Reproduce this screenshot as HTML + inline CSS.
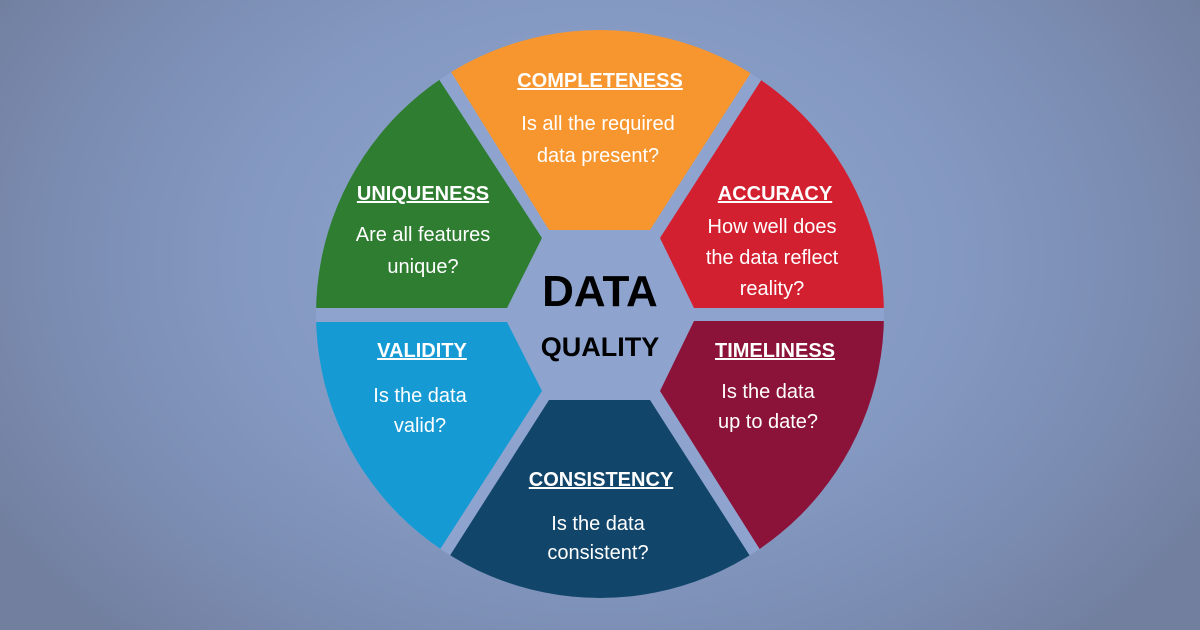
<!DOCTYPE html>
<html><head><meta charset="utf-8"><style>
html,body{margin:0;padding:0;width:1200px;height:630px;overflow:hidden}
body{background:radial-gradient(ellipse 700px 520px at 600px 260px,#90a6cf 0%,#8499c2 50%,#7a8bb0 80%,#727f9f 100%)}
svg text{font-family:"Liberation Sans",sans-serif}
.t{fill:#fff;font-weight:bold;font-size:20px;text-decoration:underline}
.b{fill:#fff;font-size:20px}
</style></head><body>
<svg width="1200" height="630" viewBox="0 0 1200 630">
<defs><clipPath id="c"><circle cx="600" cy="314" r="284"/></clipPath></defs>
<circle cx="600" cy="314" r="284" fill="#8ea4cf"/>
<g clip-path="url(#c)">
<polygon points="549,230 650,230 800,-4 404,-4" fill="#f7952f"/>
<polygon points="660,238 810,4 950,4 950,308 694,308" fill="#d32030"/>
<polygon points="694,321 950,321 950,630 810,629 660,391" fill="#8b1238"/>
<polygon points="549,400 650,400 800,634 400,634" fill="#12456a"/>
<polygon points="507,322 250,322 250,630 390,627 542,391" fill="#159ad4"/>
<polygon points="507,308 542,238 390,4 250,4 250,308" fill="#2e7d31"/>
</g>
<g text-anchor="middle">
<text class="t" x="600" y="87">COMPLETENESS</text>
<text class="b" x="598" y="130">Is all the required</text>
<text class="b" x="598" y="162">data present?</text>
<text class="t" x="423" y="200">UNIQUENESS</text>
<text class="b" x="423" y="241">Are all features</text>
<text class="b" x="423" y="273">unique?</text>
<text class="t" x="775" y="200">ACCURACY</text>
<text class="b" x="772" y="233">How well does</text>
<text class="b" x="772" y="264">the data reflect</text>
<text class="b" x="772" y="295">reality?</text>
<text class="t" x="422" y="357">VALIDITY</text>
<text class="b" x="420" y="402">Is the data</text>
<text class="b" x="420" y="432">valid?</text>
<text class="t" x="775" y="357">TIMELINESS</text>
<text class="b" x="768" y="398">Is the data</text>
<text class="b" x="768" y="428">up to date?</text>
<text class="t" x="601" y="486">CONSISTENCY</text>
<text class="b" x="598" y="530">Is the data</text>
<text class="b" x="598" y="559">consistent?</text>
<text x="600" y="306" font-size="44" font-weight="bold" fill="#000">DATA</text>
<text x="600" y="356" font-size="27" font-weight="bold" fill="#000">QUALITY</text>
</g>
</svg>
</body></html>
